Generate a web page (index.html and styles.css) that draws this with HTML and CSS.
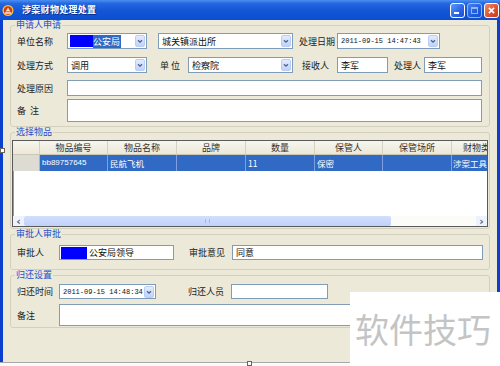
FILE: index.html
```html
<!DOCTYPE html>
<html lang="zh-CN">
<head>
    <meta charset="UTF-8">
    <title>涉案财物处理处置</title>
    <link rel="stylesheet" href="styles.css">
</head>
<body>
    <div class="window">
        <div class="titlebar">
            <svg class="app-icon" viewBox="0 0 12 13">
                <circle cx="6" cy="6.5" r="5.5" fill="#f3c640"/>
                <circle cx="6" cy="6.5" r="4.2" fill="#d8301e"/>
                <path d="M3.5 7.5 L6 3.5 L8.5 7.5 Z" fill="#fbe08a"/>
                <rect x="3" y="8.3" width="6" height="1.4" fill="#fff"/>
            </svg>
            <span class="title">涉案财物处理处置</span>
            <div class="caption-buttons">
                <span class="cap-btn min"><i></i></span>
                <span class="cap-btn max"><i></i></span>
                <span class="cap-btn close">
                    <svg viewBox="0 0 15 15"><path d="M4.5 4.5 L10.5 10.5 M10.5 4.5 L4.5 10.5" stroke="#fff" stroke-width="1.8"/></svg>
                </span>
            </div>
        </div>

        <div class="client">
            <fieldset class="group g-apply">
                <legend>申请人申请</legend>
                <div class="row r1">
                    <span class="lbl w50">单位名称</span>
                    <div class="field combo w80"><span class="redact r23"></span><span class="hilite">公安局</span><span class="arrow"><svg viewBox="0 0 10 12"><path d="M2.5 5 L5 7.5 L7.5 5" /></svg></span></div>
                    <div class="field combo w135 ml11">城关镇派出所<span class="arrow"><svg viewBox="0 0 10 12"><path d="M2.5 5 L5 7.5 L7.5 5" /></svg></span></div>
                    <span class="lbl w38 ml6">处理日期</span>
                    <div class="field combo w103 mono">2011-09-15 14:47:43<span class="arrow"><svg viewBox="0 0 10 12"><path d="M2.5 5 L5 7.5 L7.5 5" /></svg></span></div>
                </div>
                <div class="row r2">
                    <span class="lbl w50">处理方式</span>
                    <div class="field combo w80">调用<span class="arrow"><svg viewBox="0 0 10 12"><path d="M2.5 5 L5 7.5 L7.5 5" /></svg></span></div>
                    <span class="lbl w28 ml13">单&nbsp;位</span>
                    <div class="field combo w105">检察院<span class="arrow"><svg viewBox="0 0 10 12"><path d="M2.5 5 L5 7.5 L7.5 5" /></svg></span></div>
                    <span class="lbl w35 ml9">接收人</span>
                    <div class="field w51">李军</div>
                    <span class="lbl w30 ml6">处理人</span>
                    <div class="field w58">李军</div>
                </div>
                <div class="row r3">
                    <span class="lbl w50">处理原因</span>
                    <div class="field w415"></div>
                </div>
                <div class="row r4">
                    <span class="lbl w50">备&nbsp;&nbsp;注</span>
                    <div class="field w415 tall"></div>
                </div>
            </fieldset>

            <fieldset class="group g-items">
                <legend>选择物品</legend>
                <div class="grid">
                    <div class="grid-head">
                        <span class="c0"></span>
                        <span class="c1">物品编号</span>
                        <span class="c2">物品名称</span>
                        <span class="c3">品牌</span>
                        <span class="c4">数量</span>
                        <span class="c5">保管人</span>
                        <span class="c6">保管场所</span>
                        <span class="c7">财物类别</span>
                    </div>
                    <div class="grid-row selected">
                        <span class="c0"></span>
                        <span class="c1">bb89757645</span>
                        <span class="c2">民航飞机</span>
                        <span class="c3"></span>
                        <span class="c4">11</span>
                        <span class="c5">保密</span>
                        <span class="c6"></span>
                        <span class="c7">涉案工具</span>
                    </div>
                    <div class="grid-empty"></div>
                    <div class="hscroll">
                        <span class="sb-btn">&lsaquo;</span>
                        <span class="sb-thumb"><i></i></span>
                        <span class="sb-track"></span>
                        <span class="sb-btn">&rsaquo;</span>
                    </div>
                </div>
            </fieldset>

            <fieldset class="group g-approve">
                <legend>审批人审批</legend>
                <div class="row">
                    <span class="lbl w42">审批人</span>
                    <div class="field w115 short"><span class="redact r26"></span>公安局领导</div>
                    <span class="lbl w43 ml15">审批意见</span>
                    <div class="field w251 short">同意</div>
                </div>
            </fieldset>

            <fieldset class="group g-return">
                <legend>归还设置</legend>
                <div class="row">
                    <span class="lbl w42">归还时间</span>
                    <div class="field combo w97 short mono">2011-09-15 14:48:34<span class="arrow"><svg viewBox="0 0 10 12"><path d="M2.5 5 L5 7.5 L7.5 5" /></svg></span></div>
                    <span class="lbl w43 ml32">归还人员</span>
                    <div class="field w97 short"></div>
                </div>
                <div class="row r-note">
                    <span class="lbl w42">备注</span>
                    <div class="field w423 note"></div>
                </div>
            </fieldset>
        </div>
        <div class="bottom-edge"></div>

        <span class="handle h-bottom"></span>
        <span class="handle h-left"></span>
        <div class="watermark">软件技巧</div>
    </div>
</body>
</html>
```

FILE: styles.css
```css
* { margin: 0; padding: 0; box-sizing: border-box; }
body { width: 500px; height: 366px; overflow: hidden; background: #fff; font-family: "Noto Sans CJK SC", "Noto Sans", sans-serif; font-size: 9px; color: #111; }
.window { position: relative; width: 500px; height: 366px; display: flex; flex-direction: column; }

/* title bar */
.titlebar { height: 20px; flex: none; display: flex; align-items: center; padding: 0 1px 0 2px; background: linear-gradient(#4a8ff2 0%, #2466de 18%, #1255d6 55%, #0c4fd0 100%); }
.app-icon { width: 12px; height: 13px; flex: none; }
.title { margin-left: 8px; flex: 1; color: #fff; font-weight: bold; font-size: 9px; line-height: 12px; letter-spacing: 0.3px; text-shadow: 1px 1px #0b2f88; }
.caption-buttons { display: flex; gap: 2px; }
.cap-btn { position: relative; width: 15px; height: 15px; border: 1px solid #fff; border-radius: 3px; background: linear-gradient(135deg, #5c9bff, #2a63e6 60%, #1c4fd6); }
.cap-btn.min i { position: absolute; left: 3px; bottom: 3px; width: 5px; height: 2px; background: #fff; }
.cap-btn.max { opacity: 0.55; }
.cap-btn.max i { position: absolute; left: 3px; top: 3px; width: 7px; height: 7px; border: 1px solid #fff; border-top-width: 2px; }
.cap-btn.close { background: linear-gradient(135deg, #f28b6a, #e0532f 55%, #c63b1c); }
.cap-btn.close svg { display: block; width: 13px; height: 13px; }

/* window body */
.client { height: 342px; flex: none; display: flex; flex-direction: column; background: #ece9d8; border-left: 3px solid #0b3fce; border-right: 3px solid #0b3fce; }
.bottom-edge { flex: 1; background: #fafafa; border-top: 1px solid #a9a9a9; }

.group { min-width: 0; margin: 0 7px; border: 1px solid #d3d0bf; border-radius: 3px; padding: 3px 7px 4px 6px; }
.group legend { margin-left: -2px; padding: 0 1px; line-height: 10px; font-size: 9px; color: #1f4fcf; }
.g-items { padding: 3px 1px 1px 1px; }
.g-items legend { margin-left: 3px; }
.g-approve { padding-top: 6px; padding-bottom: 9px; }
.g-return { padding-top: 4px; padding-bottom: 1px; }

.row { display: flex; align-items: center; }
.r2 { margin-top: 8px; }
.r3 { margin-top: 7px; }
.r4 { margin-top: 3px; align-items: flex-start; }
.r4 .lbl { margin-top: 5px; }
.r-note { margin-top: 5px; }

.lbl { flex: none; white-space: nowrap; color: #222; }
.field { flex: none; height: 16px; display: flex; align-items: center; padding-left: 3px; border: 1px solid #7f9db9; background: #fff; white-space: nowrap; overflow: hidden; color: #111; }
.field.short { height: 15px; }
.field.tall { height: 23px; }
.field.note { height: 22px; }
.mono { font-family: "Liberation Mono", monospace; font-size: 7px; }
.combo { padding-right: 1px; }
.arrow { margin-left: auto; width: 10px; height: 12px; flex: none; border: 1px solid #b9cdf6; border-radius: 2px; background: linear-gradient(#e3ecfe, #bfd2fa); }
.arrow svg { display: block; width: 8px; height: 10px; fill: none; stroke: #4d6185; stroke-width: 1.6; }

.redact { flex: none; height: 12px; background: #0000ff; }
.r23 { width: 23px; margin-left: -1px; }
.r26 { width: 26px; margin-left: -2px; margin-right: 2px; }
.hilite { background: #316ac5; color: #fff; padding-right: 1px; }

/* widths */
.w28 { width: 28px; } .w30 { width: 30px; } .w35 { width: 35px; } .w38 { width: 38px; }
.w42 { width: 42px; } .w43 { width: 43px; } .w50 { width: 50px; } .w51 { width: 51px; }
.w58 { width: 58px; } .w80 { width: 80px; } .w97 { width: 97px; } .w103 { width: 103px; }
.w105 { width: 105px; } .w115 { width: 115px; } .w135 { width: 135px; } .w251 { width: 251px; }
.w415 { width: 415px; } .w423 { width: 423px; }
.ml6 { margin-left: 6px; } .ml9 { margin-left: 9px; } .ml11 { margin-left: 11px; } .ml13 { margin-left: 13px; }
.ml15 { margin-left: 15px; } .ml32 { margin-left: 32px; }

/* item grid */
.grid { height: 87px; min-width: 0; display: flex; flex-direction: column; overflow: hidden; border: 1px solid #5a5a5a; box-shadow: inset 1px 1px #9a9a9a; background: #fff; }
.grid-head, .grid-row { display: flex; flex: none; }
.grid-head { height: 14px; background: linear-gradient(#f7f6ee, #ebe8d8); border-bottom: 1px solid #cbc7b5; }
.grid-head span { flex: none; text-align: center; line-height: 13px; color: #333; border-right: 1px solid #d6d2c2; white-space: nowrap; overflow: hidden; }
.grid-row { height: 16px; font-size: 8.5px; }
.grid-row span { flex: none; line-height: 16px; padding-left: 2px; white-space: nowrap; overflow: hidden; }
.grid-row.selected span { background: #316ac5; color: #fff; border-right: 1px solid #7f9fe0; }
.grid-row.selected .c0 { background: #dedcd2; border-right: 1px solid #b7b4a6; }
.grid-row .c1 { font-family: "Liberation Sans", sans-serif; font-size: 8px; }
.c0 { width: 27px; } .c1 { width: 68px; } .c2 { width: 69px; } .c3 { width: 69px; }
.c4 { width: 69px; } .c5 { width: 68px; } .c6 { width: 69px; } .c7 { width: 68px; }
.grid-head .c7 { width: 35px; text-align: left; padding-left: 11px; border-right: 0; }
.grid-row .c7 { width: 35px; }
.grid-row.selected .c7 { padding-left: 1px; border-right: 0; }
.grid-empty { flex: 1; }
.hscroll { height: 10px; flex: none; display: flex; background: #fbfbf8; }
.sb-btn { width: 11px; flex: none; display: flex; align-items: center; justify-content: center; font-family: "DejaVu Sans", sans-serif; font-size: 11px; font-weight: bold; line-height: 9px; color: #4d6185; background: #eef2fd; }
.sb-thumb { width: 367px; flex: none; display: flex; align-items: center; justify-content: center; background: linear-gradient(#d2defc, #c0d1fa); border-radius: 2px; }
.sb-thumb i { width: 5px; height: 4px; border-left: 1px solid #9fb6ee; border-right: 1px solid #9fb6ee; }
.sb-track { flex: 1; min-width: 0; }

/* overlays */
.handle { position: absolute; width: 5px; height: 5px; border: 1px solid #666; background: #fff; }
.h-bottom { left: 247px; top: 361px; }
.h-left { left: 0; top: 148px; }
.watermark { position: absolute; left: 350px; top: 292px; width: 150px; height: 74px; display: flex; align-items: center; padding-left: 5px; background: #fff; color: #c4c4c4; font-size: 34px; line-height: 1; }
```
